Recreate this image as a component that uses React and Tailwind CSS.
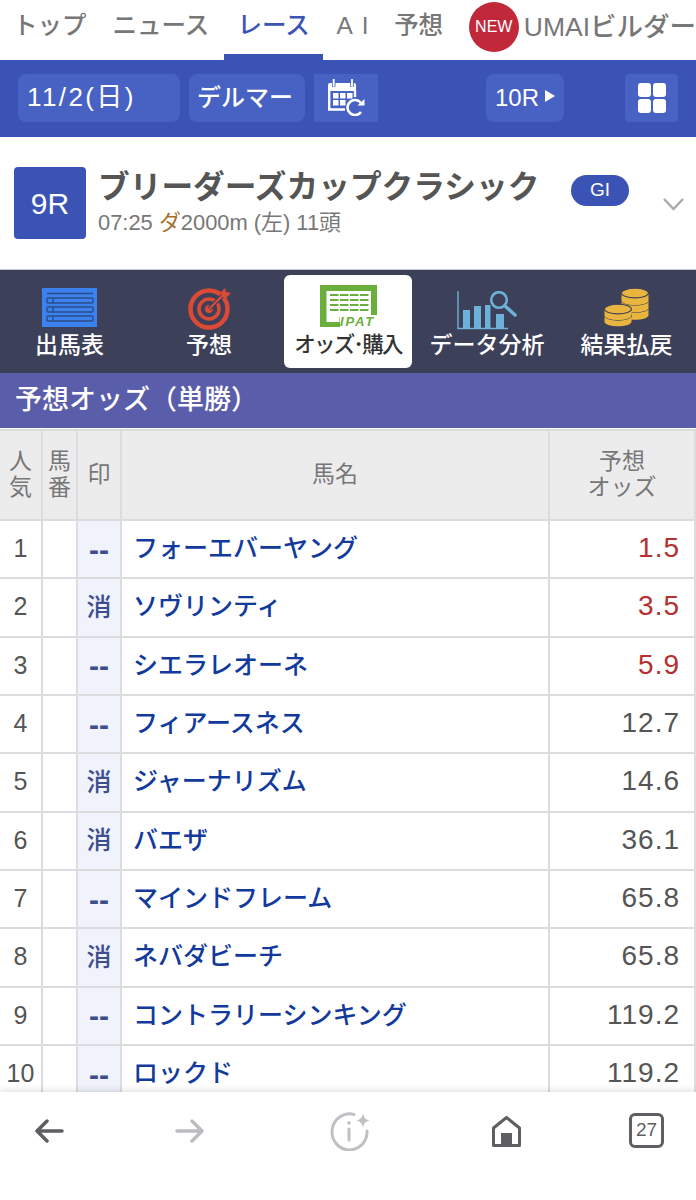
import React from "react";

const font = { fontFamily: '"Liberation Sans","Noto Sans CJK JP",sans-serif' };

const rows = [
  ["1", "--", "フォーエバーヤング", "1.5", true],
  ["2", "消", "ソヴリンティ", "3.5", true],
  ["3", "--", "シエラレオーネ", "5.9", true],
  ["4", "--", "フィアースネス", "12.7"],
  ["5", "消", "ジャーナリズム", "14.6"],
  ["6", "消", "バエザ", "36.1"],
  ["7", "--", "マインドフレーム", "65.8"],
  ["8", "消", "ネバダビーチ", "65.8"],
  ["9", "--", "コントラリーシンキング", "119.2"],
  ["10", "--", "ロックド", "119.2"],
];

const Calendar = () => (
  <svg width="37" height="37" viewBox="0 0 37 37" fill="none">
    <path d="M0 6a2 2 0 0 1 2-2h24a2 2 0 0 1 2 2v6H0z" fill="#fff" />
    <path d="M1.200 11v19.500H17" stroke="#fff" strokeWidth="2.400" />
    <path d="M27 11v7" stroke="#fff" strokeWidth="2.400" />
    <path d="M5.700 0v8M24 0v8" stroke="#4762c3" strokeWidth="3.500" />
    <path d="M5.700 0v7M24 0v7" stroke="#fff" strokeWidth="1.800" strokeLinecap="round" />
    <g fill="#fff">
      <rect x="5" y="14" width="5.500" height="5.500" />
      <rect x="12" y="14" width="5.500" height="5.500" />
      <rect x="19" y="14" width="5.500" height="5.500" />
      <rect x="5" y="21" width="5.500" height="5.500" />
      <rect x="12" y="21" width="5.500" height="5.500" />
    </g>
    <path d="M33 33a7.500 7.500 0 1 1 0-9" stroke="#fff" strokeWidth="2.600" />
    <path d="M29.500 26.500h7v-6.500z" fill="#fff" />
  </svg>
);

const TableIcon = () => (
  <svg width="55" height="39" viewBox="0 0 55 39">
    <rect width="55" height="39" fill="#3b82ee" />
    <path d="M5 5.500h46" stroke="#2c4c88" strokeWidth="1.400" />
    {[10, 19, 28].map((y) => (
      <g key={y} fill="none" stroke="#2c4c88" strokeWidth="1.400">
        <rect x="5" y={y} width="46" height="5" rx="1" />
        <path d={`M11 ${y}v5`} />
      </g>
    ))}
  </svg>
);

const Target = () => (
  <svg width="43" height="42" viewBox="0 0 43 42" fill="none">
    <circle cx="21" cy="21" r="18.500" stroke="#dc4a36" strokeWidth="4.500" />
    <circle cx="21" cy="21" r="10" stroke="#dc4a36" strokeWidth="3.500" />
    <circle cx="21" cy="21" r="4" fill="#dc4a36" />
    <path d="M21 21 36 6" stroke="#3c4059" strokeWidth="4.500" />
    <path d="M21 21 36 6" stroke="#dc4a36" strokeWidth="2.200" />
    <path d="M33 4l4-4 1 4 5 1-5 5-4-1z" fill="#dc4a36" />
  </svg>
);

const Ipat = () => (
  <svg width="57" height="42" viewBox="0 0 57 42" className="overflow-visible">
    <rect width="57" height="42" fill="#6aae3c" />
    <rect x="6.500" y="6" width="44.500" height="26" fill="#fff" />
    <rect x="6.500" y="32" width="13" height="5" fill="#fff" />
    <rect x="20" y="30" width="37" height="12" fill="#fff" />
    {[9, 14, 19, 24].map((y) =>
      [10, 20, 30, 40].map((x) => <rect key={`${x}-${y}`} x={x} y={y} width="8.500" height="2" fill="#6aae3c" />)
    )}
    <text x="20" y="41" fontSize="13" fontWeight="700" fontStyle="italic" fill="#6aae3c" letterSpacing="1.800">
      IPAT
    </text>
  </svg>
);

const Chart = () => (
  <svg width="61" height="39" viewBox="0 0 61 39" fill="none" stroke="#6cb1d8">
    <path d="M1 0v37.500h50" strokeWidth="1.400" />
    <g fill="#6cb1d8" stroke="none">
      <rect x="6" y="19" width="7" height="18" />
      <rect x="17" y="15" width="7" height="22" />
      <rect x="28" y="14" width="5.500" height="23" />
      <rect x="39" y="23" width="8" height="14" />
    </g>
    <circle cx="42" cy="9" r="7.800" strokeWidth="2.600" fill="#3c4059" />
    <path d="M48 15l10 9" strokeWidth="3.500" strokeLinecap="round" />
  </svg>
);

const Coin = ({ x, y, n, gap }) => (
  <g>
    {Array.from({ length: n }).map((_, i) => {
      const cy = y - i * gap;
      return (
        <g key={i}>
          <path
            d={`M${x - 13.5} ${cy}v${i === 0 ? 0 : gap}a13.500 4.800 0 0 0 27 0v${i === 0 ? 0 : -gap}z`}
            fill="#eab53f"
          />
          <ellipse cx={x} cy={cy} rx="13.500" ry="4.800" fill="#eab53f" stroke="#3c4059" strokeWidth="1.100" />
        </g>
      );
    })}
  </g>
);

const Coins = () => (
  <svg width="45" height="39" viewBox="0 0 45 39">
    <Coin x={31} y={27} n={4} gap={7.300} />
    <Coin x={14} y={33.500} n={3} gap={6.200} />
  </svg>
);

const Tab = ({ icon, label, className, mb = "" }) => (
  <div className={`flex flex-col items-center text-white ${className}`}>
    <div className={`h-[55px] flex items-end justify-center ${mb}`}>{icon}</div>
    <div className="text-[23px] leading-[30px] whitespace-nowrap font-medium">{label}</div>
  </div>
);

const Cell = ({ className = "", children }) => (
  <div className={`flex items-center border-r-2 border-b-2 border-[#dcdcdf] ${className}`}>{children}</div>
);

const cols = "grid grid-cols-[43px_35px_44px_428px_146px]";

export default function App() {
  return (
    <div style={font} className="w-[696px] h-[1200px] overflow-hidden flex flex-col bg-white text-[#555]">
      {/* top nav */}
      <div className="h-[60px] flex items-start shrink-0 text-[#777] text-[24.500px] leading-[52px] whitespace-nowrap font-medium">
        <div className="w-[225px] flex pl-[13px] gap-[26px]">
          <span>トップ</span>
          <span>ニュース</span>
        </div>
        <div className="w-[100px] h-[60px] text-center text-[#3a53b5] border-b-[6px] border-[#3a53b5]">レース</div>
        <div className="ml-[13px] w-[58px] tracking-[9px]">AI</div>
        <div className="w-[75px]">予想</div>
        <div className="w-[50px] h-[50px] mt-[2px] rounded-full bg-[#c1293a] text-white text-[16px] font-normal leading-[50px] text-center shrink-0">NEW</div>
        <div className="ml-[5px] text-[26.500px] leading-[54px]">UMAIビルダー</div>
      </div>
      {/* blue toolbar */}
      <div className="h-[77px] shrink-0 bg-[#3a53b5] flex items-center pl-[18px] text-white text-[24px]">
        <div className="w-[162px] h-[48px] rounded-lg bg-[#4762c3] flex items-center pl-[9px] mt-[-2px] text-[26px] tracking-[2.400px]">11/2(日)</div>
        <div className="ml-[9px] w-[116px] h-[48px] rounded-lg bg-[#4762c3] flex items-center justify-center pr-[4px] mt-[-2px] font-medium">デルマー</div>
        <div className="ml-[9px] w-[64px] h-[48px] bg-[#4762c3] flex items-center justify-center mt-[-2px]">
          <Calendar />
        </div>
        <div className="ml-[108px] w-[78px] h-[48px] rounded-lg bg-[#4762c3] flex items-center justify-center gap-[6px] mt-[-2px]">
          10R
          <span className="w-0 h-0 border-y-[6px] border-y-transparent border-l-[10px] border-l-white mt-[-4px]" />
        </div>
        <div className="ml-[61px] w-[53px] h-[48px] rounded-sm bg-[#4762c3] grid grid-cols-[13px_13px] grid-rows-[14px_14px] gap-[2px] content-center justify-center mt-[-2px]">
          <div className="rounded-[3px] bg-white" />
          <div className="rounded-[3px] bg-white" />
          <div className="rounded-[3px] bg-white" />
          <div className="rounded-[3px] bg-white" />
        </div>
      </div>
      {/* race heading */}
      <div className="h-[132px] shrink-0 flex items-start pt-[30px] pl-[14px] relative">
        <div className="w-[72px] h-[72px] rounded bg-[#3a53b5] text-white text-[30px] flex items-center justify-center">9R</div>
        <div className="ml-[12px] w-[473px] shrink-0">
          <div className="text-[31.700px] leading-[40px] font-bold text-[#555] whitespace-nowrap">ブリーダーズカップクラシック</div>
          <div className="text-[21.900px] leading-[30px] text-[#777] mt-[1px] whitespace-nowrap">
            07:25 <span className="text-[#a5702c]">ダ</span>2000m (左) 11頭
          </div>
        </div>
        <div className="mt-[8px] w-[58px] h-[31px] rounded-full bg-[#3a53b5] text-white text-[19px] flex items-center justify-center">GI</div>
        <svg className="absolute left-[662px] top-[60px]" width="23" height="14" viewBox="0 0 23 14" fill="none" stroke="#aaa" strokeWidth="2.500">
          <path d="M2 2l9.500 10L21 2" />
        </svg>
      </div>
      {/* tabs */}
      <div className="h-[104px] shrink-0 bg-[#3c4059] border-t border-[#c9cbd6] flex items-start pt-[5px]">
        <Tab icon={<TableIcon />} label="出馬表" className="w-[139px]" mb="pb-[3px]" />
        <Tab icon={<Target />} label="予想" className="w-[140px]" />
        <div className="ml-[5px] w-[128px] h-[93px] bg-white rounded-md flex flex-col items-center text-[#333] shrink-0">
          <div className="h-[55px] pb-[3px] flex items-end">
            <Ipat />
          </div>
          <div className="text-[21.500px] leading-[30px] tracking-[-1.800px] whitespace-nowrap font-medium">オッズ･購入</div>
        </div>
        <Tab icon={<Chart />} label="データ分析" className="ml-[5px] w-[140px]" />
        <Tab icon={<Coins />} label="結果払戻" className="w-[139px]" mb="pb-[3px]" />
      </div>
      {/* section */}
      <div className="h-[55px] shrink-0 bg-[#5a5daa] text-white text-[27px] font-medium flex items-center pl-[15px] whitespace-nowrap">
        予想オッズ（単勝）
      </div>
      {/* table */}
      <div className="flex-1 min-h-0 overflow-hidden text-[25px]">
        <div className={`${cols} h-[92px] bg-[#ececec] text-[#777] text-[23px] leading-[26px] border-t-2 border-[#dcdcdf] mt-[1px] text-center`}>
          <Cell className="justify-center pb-[2px]"><span>人<br />気</span></Cell>
          <Cell className="justify-center pb-[2px]"><span>馬<br />番</span></Cell>
          <Cell className="justify-center pb-[2px]">印</Cell>
          <Cell className="justify-center pb-[2px]">馬名</Cell>
          <Cell className="justify-center pb-[2px]"><span>予想<br />オッズ</span></Cell>
        </div>
        {rows.map(([n, mark, name, odds, red]) => (
          <div key={n} className={`${cols} h-[58.330px]`}>
            <Cell className="justify-center text-[#555] pb-[1px]">{n}</Cell>
            <Cell />
            <Cell className={`justify-center bg-[#f0f2fc] text-[#3e4d8e] ${mark === "--" ? "font-bold text-[30px]" : "font-medium"}`}>{mark}</Cell>
            <Cell className="pl-[11px] text-[#123a9c] font-medium whitespace-nowrap pb-[1px]">{name}</Cell>
            <Cell className={`justify-end pr-[14px] pb-[2px] text-[28px] tracking-[1px] ${red ? "text-[#b5302f]" : "text-[#555]"}`}>{odds}</Cell>
          </div>
        ))}
      </div>
      {/* bottom bar */}
      <div className="h-[108px] shrink-0 bg-white shadow-[0_-2px_6px_rgba(0,0,0,0.12)] pl-[35px] flex items-start text-[#5f5f63]">
        <svg className="mt-[27px]" width="29" height="24" viewBox="0 0 29 24" fill="none" stroke="#5f5f63" strokeWidth="3.500" strokeLinecap="round" strokeLinejoin="round">
          <path d="M27 12H3M12 2 2 12l10 10" />
        </svg>
        <svg className="mt-[27px] ml-[111px]" width="29" height="24" viewBox="0 0 29 24" fill="none" stroke="#bcbcc0" strokeWidth="3.500" strokeLinecap="round" strokeLinejoin="round">
          <path d="M2 12h24M17 2l10 10-10 10" />
        </svg>
        <svg className="mt-[20px] ml-[126px]" width="41" height="39" viewBox="0 0 41 39" fill="none" stroke="#c0c0c4" strokeWidth="3" strokeLinecap="round">
          <path d="M24 2.500A17.500 18 0 1 0 37 19" />
          <path d="M19 17v11" />
          <circle cx="19" cy="11" r="1.800" fill="#c0c0c4" stroke="none" />
          <path d="M33 1c1 5 2 6 6.500 7.500C35 10 34 11 33 16c-1-5-2-6-6.500-7.500C31 7 32 6 33 1z" fill="#c0c0c4" stroke="none" />
        </svg>
        <svg className="mt-[24px] ml-[121px]" width="29" height="31" viewBox="0 0 29 31" fill="none">
          <path d="M1.500 29.500V12L14.500 1.500l13 10.500v17.500z" stroke="#5f5f63" strokeWidth="3" strokeLinejoin="round" />
          <rect x="9" y="17" width="11" height="13" fill="#5f5f63" />
        </svg>
        <div className="w-[35px] h-[35px] ml-[108px] mt-[21px] rounded-md border-[3px] border-[#5f5f63] text-[19px] leading-[27px] text-center">27</div>
      </div>
    </div>
  );
}
